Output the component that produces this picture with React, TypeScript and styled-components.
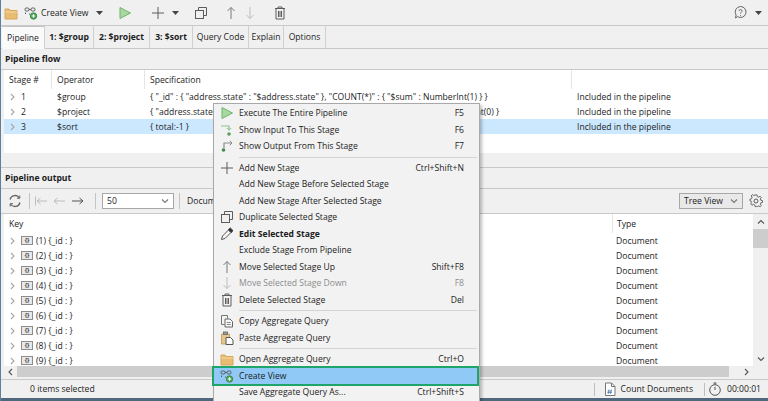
import React from 'react';
import styled, { createGlobalStyle } from 'styled-components';

const GlobalStyle = createGlobalStyle`
  html, body {
    margin: 0;
    padding: 0;
    background: #f0f0f0;
  }

  * {
    box-sizing: border-box;
  }
`;

const Window = styled.div`
  position: relative;
  width: 768px;
  height: 401px;
  overflow: hidden;
  background: #f0f0f0;
  color: #1c1c1c;
  font-family: 'Open Sans', 'Noto Sans', sans-serif;
  font-size: 8.6px;
  border-left: 1px solid #5f7f9f;
  display: flex;
  flex-direction: column;
`;

const Toolbar = styled.div`
  height: 26px;
  flex: none;
  display: flex;
  align-items: center;
  border-bottom: 1px solid #c9c9c9;
`;

const ToolSlot = styled.span<{ $w: number }>`
  width: ${({ $w }) => $w}px;
  flex: none;
  display: flex;
  align-items: center;
  justify-content: center;
`;

const ToolLabel = styled.span`
  width: 55px;
  flex: none;
  white-space: nowrap;
`;

const Grow = styled.div`
  flex: 1;
`;

const TabBar = styled.div`
  height: 23px;
  flex: none;
  display: flex;
  padding-left: 1px;
  border-bottom: 1px solid #c9c9c9;
`;

const Tab = styled.div<{ $w: number; $active?: boolean; $bold?: boolean }>`
  width: ${({ $w }) => $w}px;
  flex: none;
  display: flex;
  align-items: center;
  justify-content: center;
  white-space: nowrap;
  border-right: 1px solid #d0d0d0;
  font-weight: ${({ $bold }) => ($bold ? 700 : 400)};
  background: ${({ $active }) => ($active ? '#fafafa' : 'transparent')};
  border-top: ${({ $active }) => ($active ? '1px solid #c4c4c4' : 'none')};
  height: ${({ $active }) => ($active ? '23px' : '22px')};
`;

const SectionTitle = styled.div`
  height: 21px;
  flex: none;
  padding-left: 4px;
  display: flex;
  align-items: center;
  font-weight: 700;
  border-bottom: 1px solid #c9c9c9;
`;

const FlowTable = styled.div`
  height: 83px;
  flex: none;
  margin-left: 3px;
  background: #fff;
`;

const flowColumns = '48px 93px 427px 1fr';

const FlowHead = styled.div`
  height: 19px;
  display: grid;
  grid-template-columns: ${flowColumns};
  align-items: stretch;
`;

const FlowHeadCell = styled.div`
  padding-left: 5px;
  display: flex;
  align-items: center;
  border-right: 1px solid #e4e4e4;

  &:last-child {
    border-right: none;
  }
`;

const FlowRow = styled.div<{ $selected?: boolean }>`
  height: 15px;
  display: grid;
  grid-template-columns: ${flowColumns};
  align-items: center;
  white-space: nowrap;
  background: ${({ $selected }) => ($selected ? '#cce8ff' : 'transparent')};
`;

const StageCell = styled.div`
  display: flex;
  align-items: center;
  gap: 4px;
  padding-left: 5px;
`;

const FlowCell = styled.div`
  padding-left: 5px;
  overflow: hidden;
`;

const Divider = styled.div`
  height: 15px;
  flex: none;
  border-bottom: 1px solid #c9c9c9;
`;

const OutputTools = styled.div`
  height: 25px;
  flex: none;
  display: flex;
  align-items: center;
  border-bottom: 1px solid #c9c9c9;
`;

const ToolSep = styled.span<{ $left: number; $right: number }>`
  width: 1px;
  height: 16px;
  flex: none;
  background: #c4c4c4;
  margin: 0 ${({ $right }) => $right}px 0 ${({ $left }) => $left}px;
`;

const Combo = styled.div<{ $w: number }>`
  width: ${({ $w }) => $w}px;
  height: 16px;
  flex: none;
  display: flex;
  align-items: center;
  justify-content: space-between;
  padding: 0 4px;
  white-space: nowrap;
  border: 1px solid #a8a8a8;
  background: ${({ $w }) => ($w > 70 ? '#fff' : '#e9e9e9')};
`;

const OutputBody = styled.div`
  height: 152px;
  flex: none;
  display: flex;
  background: #fff;
  margin-left: 3px;
`;

const OutputList = styled.div`
  flex: 1;
  overflow: hidden;
`;

const outputColumns = '608px 1fr';

const OutputHead = styled.div`
  height: 19px;
  display: grid;
  grid-template-columns: ${outputColumns};
  align-items: center;
`;

const HeadText = styled.div`
  padding-left: 5px;
  height: 100%;
  display: flex;
  align-items: center;

  & + & {
    border-left: 1px solid #e4e4e4;
    padding-left: 4px;
  }
`;

const OutputRow = styled.div`
  height: 15px;
  display: grid;
  grid-template-columns: ${outputColumns};
  align-items: center;
`;

const KeyCell = styled.div`
  display: flex;
  align-items: center;
  padding-left: 5px;
  gap: 3px;
`;

const DocBadge = styled.span`
  width: 12px;
  height: 9px;
  flex: none;
  margin-left: 1px;
  border: 1px solid #8c8c8c;
  background: #e8e8e8;
  font-size: 6px;
  line-height: 7px;
  font-weight: 700;
  text-align: center;
  color: #444;
`;

const TypeCell = styled.div`
  padding-left: 4px;
`;

const VScroll = styled.div`
  width: 15px;
  flex: none;
  background: #f0f0f0;
  display: flex;
  flex-direction: column;
  align-items: center;
`;

const ScrollEnd = styled.div`
  height: 15px;
  flex: none;
  display: flex;
  align-items: center;
  justify-content: center;
`;

const VThumb = styled.div`
  width: 100%;
  height: 19px;
  flex: none;
  background: #cdcdcd;
`;

const HScroll = styled.div`
  height: 11px;
  flex: none;
  display: flex;
  align-items: center;
  background: #f0f0f0;
  margin-left: 3px;
`;

const HEnd = styled.div<{ $w: number }>`
  width: ${({ $w }) => $w}px;
  flex: none;
  display: flex;
  align-items: center;
  justify-content: center;
`;

const HThumb = styled.div`
  width: 712px;
  height: 11px;
  flex: none;
  background: #cdcdcd;
`;

const StatusBar = styled.div`
  flex: 1;
  display: flex;
  align-items: center;
  border-top: 1px solid #c9c9c9;
  margin-top: 2px;
  padding-left: 29px;
  white-space: nowrap;
`;

const WindowEdge = styled.div`
  height: 3px;
  flex: none;
  margin-left: -1px;
  background: #50687e;
`;

const StatusSep = styled.span`
  width: 1px;
  height: 13px;
  flex: none;
  background: #bdbdbd;
`;

const StatusItem = styled.span<{ $gap: number; $w: number }>`
  width: ${({ $w }) => $w}px;
  flex: none;
  display: flex;
  align-items: center;
  gap: ${({ $gap }) => $gap}px;
  justify-content: flex-end;
`;

const Menu = styled.div`
  position: absolute;
  left: 212px;
  top: 103px;
  width: 267px;
  height: 300px;
  padding-top: 1px;
  background: #f2f2f2;
  border: 1px solid #a9a9a9;
  box-shadow: 2px 2px 3px rgba(0, 0, 0, 0.25);
`;

const MenuRow = styled.div<{ $highlight?: boolean; $disabled?: boolean; $bold?: boolean }>`
  height: 16.5px;
  display: grid;
  grid-template-columns: 25px 1fr auto;
  align-items: center;
  padding-right: 15px;
  white-space: nowrap;
  font-weight: ${({ $bold }) => ($bold ? 700 : 400)};
  color: ${({ $disabled }) => ($disabled ? '#8d8d8d' : '#1c1c1c')};
  ${({ $highlight }) =>
    $highlight &&
    `
    background: #90c8f6;
    outline: 2px solid #1fa56a;
    margin-right: 2px;
    padding-right: 13px;
  `}
`;

const MenuIcon = styled.span`
  display: flex;
  align-items: center;
  justify-content: center;
`;

const MenuSep = styled.div`
  height: 5px;
  display: flex;
  align-items: center;
  padding: 0 2px 0 25px;

  &::after {
    content: '';
    flex: 1;
    height: 1px;
    background: #d4d4d4;
  }
`;

const Svg: React.FC<{ w?: number; h?: number; children: React.ReactNode }> = ({ w = 14, h = 14, children }) => (
  <svg width={w} height={h} viewBox="0 0 14 14" fill="none" stroke="#5c5c5c" strokeWidth="1">
    {children}
  </svg>
);

const Folder = () => (
  <Svg>
    <path d="M1 3h4l1 1.5h7V13H1z" fill="#e9bd71" stroke="#d6a65a" />
    <path d="M1 6h12" stroke="#f3d9a5" />
  </Svg>
);
const CreateViewIcon = () => (
  <Svg>
    <rect x="1" y="2" width="4" height="3" rx="1.2" />
    <rect x="7" y="2" width="4" height="3" rx="1.2" />
    <path d="M5 3.5h2M1.5 6.5v1.5M5 8h1" />
    <circle cx="9.5" cy="10" r="3.2" fill="#4fa85a" stroke="#3f8a4b" />
    <path d="M9.5 8.3v3.4M7.8 10h3.4" stroke="#fff" />
  </Svg>
);
const Play = () => (
  <Svg>
    <path d="M2 1.5 L12.5 7 L2 12.5z" fill="#a8d8a0" stroke="#6fb56c" />
  </Svg>
);
const Plus = () => (
  <Svg>
    <path d="M7 1v12M1 7h12" />
  </Svg>
);
const Duplicate = () => (
  <Svg>
    <rect x="1.5" y="4.5" width="8" height="8" fill="#f0f0f0" />
    <path d="M4.5 4.5v-3h8v8h-3" />
  </Svg>
);
const ArrowUp: React.FC<{ light?: boolean }> = ({ light }) => (
  <Svg>
    <path d="M7 13V1.5M3.5 5 7 1.5 10.500 5" stroke={light ? '#bdbdbd' : '#7a7a7a'} />
  </Svg>
);
const ArrowDown: React.FC<{ light?: boolean }> = ({ light }) => (
  <Svg>
    <path d="M7 1v11.500M3.500 9 7 12.500 10.500 9" stroke={light ? '#bdbdbd' : '#7a7a7a'} />
  </Svg>
);
const Trash = () => (
  <Svg>
    <path d="M2 2.500h10M5 2.500v-1.500h4v1.500M3 2.500h8v10.500H3zM5.500 5v6M7 5v6M8.500 5v6" />
  </Svg>
);
const Help = () => (
  <svg width="15" height="15" viewBox="0 0 15 15" fill="none" stroke="#666">
    <path d="M7.500 1.500a5.500 5.500 0 1 1-3 10.100L2.500 13l.6-3a5.500 5.500 0 0 1 4.400-8.500z" />
    <path d="M6 6a1.500 1.500 0 1 1 2.300 1.300c-.5.300-.8.600-.8 1.200M7.500 10v.8" />
  </svg>
);
const Caret = () => (
  <svg width="7" height="4" viewBox="0 0 7 4">
    <path d="M0 0h7L3.500 4z" fill="#444" />
  </svg>
);
const Chevron: React.FC<{ dir?: 'right' | 'down' | 'up' | 'left'; color?: string }> = ({ dir = 'right', color = '#a6a6a6' }) => {
  const d = {
    right: 'M2 1l3 3-3 3',
    left: 'M5 1L2 4l3 3',
    down: 'M1 2.500l3 3 3-3',
    up: 'M1 5.500l3-3 3 3',
  }[dir];
  return (
    <svg width="8" height="8" viewBox="0 0 8 8" fill="none" stroke={color} strokeWidth="1.100">
      <path d={d} />
    </svg>
  );
};
const Refresh = () => (
  <Svg>
    <path d="M2 5.500a5.200 5.200 0 0 1 9.500-1.500M12 8.500a5.200 5.200 0 0 1-9.500 1.500" stroke="#666" strokeWidth="1.300" />
    <path d="M11.800 1.500V4.300H9M2.200 12.500V9.700H5" stroke="#666" />
  </Svg>
);
const NavFirst = () => (
  <Svg>
    <path d="M1.500 2.500v9M13 7H3M6.500 4 3 7l3.500 3" stroke="#bcbcbc" />
  </Svg>
);
const NavPrev = () => (
  <Svg>
    <path d="M13 7H2M5.500 4 2 7l3.500 3" stroke="#bcbcbc" />
  </Svg>
);
const NavNext = () => (
  <Svg>
    <path d="M1 7h11M8.500 4 12 7l-3.500 3" stroke="#555" />
  </Svg>
);
const Gear = () => (
  <Svg>
    <circle cx="7" cy="7" r="2" />
    <path d="M6 1h2l.4 1.800 1.500.6 1.500-1 1.300 1.400-1 1.500.6 1.500 1.700.4v1.800l-1.700.4-.6 1.500 1 1.500-1.300 1.400-1.500-1-1.500.6L8 13.500H6l-.4-1.800-1.500-.6-1.500 1-1.300-1.400 1-1.500-.6-1.500L.5 7.300V5.500l1.700-.4.6-1.500-1-1.500L3.100.700l1.500 1 1.400-.7z" transform="translate(0.500 0) scale(.93)" />
  </Svg>
);
const ShowInput = () => (
  <Svg>
    <path d="M1 3h8v4" stroke="#8fbf8a" strokeWidth="1.200" />
    <path d="M6.800 5 9 7.300 11.200 5" stroke="#8fbf8a" />
    <circle cx="9" cy="11" r="1.800" fill="#5b9f5e" stroke="none" />
  </Svg>
);
const ShowOutput = () => (
  <Svg>
    <path d="M4 9V4h8" stroke="#8a8a8a" strokeWidth="1.200" />
    <path d="M9.800 1.800 12 4 9.800 6.200" stroke="#8a8a8a" />
    <circle cx="3.500" cy="11" r="1.800" fill="#3f8a4b" stroke="none" />
  </Svg>
);
const Pencil = () => (
  <Svg>
    <path d="M1.500 12.500l1-3.500 6-6 2.500 2.500-6 6z" fill="#f4f4f4" stroke="#555" />
    <path d="M8.500 2.500l1.800-1.500 2.700 2.700-2 1.800z" fill="#333" stroke="#333" />
  </Svg>
);
const CopyDoc = () => (
  <Svg>
    <path d="M1.500 1.500h6v3M1.500 1.500v9h3" stroke="#777" />
    <path d="M5 5h5l2.500 2.500V13H5z" fill="#f7f7f7" stroke="#666" />
    <path d="M6.800 8.500h4M6.800 10.500h4" stroke="#888" />
  </Svg>
);
const PasteDoc = () => (
  <Svg>
    <path d="M1.500 3h8v10h-8z" fill="#e6c58e" stroke="#c9a467" />
    <rect x="3.500" y="1" width="4" height="2.500" fill="#999" stroke="#777" />
    <path d="M6 6.500h4.500L13 9v4.500H6z" fill="#fdfdfd" stroke="#555" />
  </Svg>
);
const CountDoc = () => (
  <Svg>
    <path d="M2.500 1h6L12 4.500V13.500H2.500z" stroke="#777" fill="#fff" />
    <path d="M8.500 1v3.500H12" stroke="#777" />
    <path d="M6 7.500l-.8 4.500M8.300 7.500l-.8 4.500M4.500 9h4.500M4.300 10.500h4.500" stroke="#3b6fa8" strokeWidth=".7" />
  </Svg>
);
const Clock = () => (
  <Svg>
    <circle cx="7" cy="8" r="5.300" stroke="#555" />
    <path d="M5.500 1h3M7 1v1.500M7 8V4.800" stroke="#555" />
  </Svg>
);

type MenuEntry = { label?: string; key?: string; icon?: React.ReactNode; bold?: boolean; disabled?: boolean; highlight?: boolean; sep?: boolean };

const menuEntries: MenuEntry[] = [
  { label: 'Execute The Entire Pipeline', key: 'F5', icon: <Play /> },
  { label: 'Show Input To This Stage', key: 'F6', icon: <ShowInput /> },
  { label: 'Show Output From This Stage', key: 'F7', icon: <ShowOutput /> },
  { sep: true },
  { label: 'Add New Stage', key: 'Ctrl+Shift+N', icon: <Plus /> },
  { label: 'Add New Stage Before Selected Stage' },
  { label: 'Add New Stage After Selected Stage' },
  { label: 'Duplicate Selected Stage', icon: <Duplicate /> },
  { label: 'Edit Selected Stage', bold: true, icon: <Pencil /> },
  { label: 'Exclude Stage From Pipeline' },
  { label: 'Move Selected Stage Up', key: 'Shift+F8', icon: <ArrowUp /> },
  { label: 'Move Selected Stage Down', key: 'F8', disabled: true, icon: <ArrowDown light /> },
  { label: 'Delete Selected Stage', key: 'Del', icon: <Trash /> },
  { sep: true },
  { label: 'Copy Aggregate Query', icon: <CopyDoc /> },
  { label: 'Paste Aggregate Query', icon: <PasteDoc /> },
  { sep: true },
  { label: 'Open Aggregate Query', key: 'Ctrl+O', icon: <Folder /> },
  { label: 'Create View', highlight: true, icon: <CreateViewIcon /> },
  { label: 'Save Aggregate Query As...', key: 'Ctrl+Shift+S' },
];

const flowRows = [
  { n: 1, op: '$group', spec: '{ "_id" : { "address.state" : "$address.state" }, "COUNT(*)" : { "$sum" : NumberInt(1) } }' },
  { n: 2, op: '$project', spec: '{ "address.state" : "$_id.address.state", "COUNT(*)" : "$COUNT(*)", "_id" : NumberInt(0) }' },
  { n: 3, op: '$sort', spec: '{ total:-1 }', selected: true },
];

const tabs = [
  { label: 'Pipeline', w: 43, active: true },
  { label: '1: $group', w: 49, bold: true },
  { label: '2: $project', w: 56, bold: true },
  { label: '3: $sort', w: 43, bold: true },
  { label: 'Query Code', w: 56 },
  { label: 'Explain', w: 35 },
  { label: 'Options', w: 42 },
];

const App: React.FC = () => (
  <Window>
    <GlobalStyle />
    <Toolbar>
      <ToolSlot $w={20}><Folder /></ToolSlot>
      <ToolSlot $w={20}><CreateViewIcon /></ToolSlot>
      <ToolLabel>Create View</ToolLabel>
      <ToolSlot $w={7}><Caret /></ToolSlot>
      <ToolSlot $w={44}><Play /></ToolSlot>
      <ToolSlot $w={22}><Plus /></ToolSlot>
      <ToolSlot $w={12}><Caret /></ToolSlot>
      <ToolSlot $w={40}><Duplicate /></ToolSlot>
      <ToolSlot $w={20}><ArrowUp /></ToolSlot>
      <ToolSlot $w={18}><ArrowDown light /></ToolSlot>
      <ToolSlot $w={42}><Trash /></ToolSlot>
      <Grow />
      <ToolSlot $w={15}><Help /></ToolSlot>
      <ToolSlot $w={20}><Caret /></ToolSlot>
    </Toolbar>
    <TabBar>
      {tabs.map((t) => (
        <Tab key={t.label} $w={t.w} $active={t.active} $bold={t.bold}>{t.label}</Tab>
      ))}
    </TabBar>
    <SectionTitle>Pipeline flow</SectionTitle>
    <FlowTable>
      <FlowHead>
        <FlowHeadCell>Stage #</FlowHeadCell>
        <FlowHeadCell>Operator</FlowHeadCell>
        <FlowHeadCell>Specification</FlowHeadCell>
        <FlowHeadCell />
      </FlowHead>
      {flowRows.map((r) => (
        <FlowRow key={r.n} $selected={r.selected}>
          <StageCell><Chevron />{r.n}</StageCell>
          <FlowCell>{r.op}</FlowCell>
          <FlowCell>{r.spec}</FlowCell>
          <FlowCell>Included in the pipeline</FlowCell>
        </FlowRow>
      ))}
    </FlowTable>
    <Divider />
    <SectionTitle>Pipeline output</SectionTitle>
    <OutputTools>
      <ToolSlot $w={28}><Refresh /></ToolSlot>
      <ToolSep $left={0} $right={3} />
      <ToolSlot $w={16}><NavFirst /></ToolSlot>
      <ToolSlot $w={19}><NavPrev /></ToolSlot>
      <ToolSlot $w={20}><NavNext /></ToolSlot>
      <ToolSep $left={7} $right={6} />
      <Combo $w={72}>50<Chevron dir="down" color="#777" /></Combo>
      <ToolSep $left={5} $right={7} />
      <span>Documents</span>
      <Grow />
      <Combo $w={64}>Tree View<Chevron dir="down" color="#777" /></Combo>
      <ToolSlot $w={25}><Gear /></ToolSlot>
    </OutputTools>
    <OutputBody>
      <OutputList>
        <OutputHead>
          <HeadText>Key</HeadText>
          <HeadText>Type</HeadText>
        </OutputHead>
        {[1, 2, 3, 4, 5, 6, 7, 8, 9].map((n) => (
          <OutputRow key={n}>
            <KeyCell>
              <Chevron />
              <DocBadge>{'{}'}</DocBadge>
              <span>({n}) {'{_id : }'}</span>
            </KeyCell>
            <TypeCell>Document</TypeCell>
          </OutputRow>
        ))}
      </OutputList>
      <VScroll>
        <ScrollEnd><Chevron dir="up" color="#555" /></ScrollEnd>
        <VThumb />
        <Grow />
        <ScrollEnd><Chevron dir="down" color="#555" /></ScrollEnd>
      </VScroll>
    </OutputBody>
    <HScroll>
      <HEnd $w={13}><Chevron dir="left" color="#555" /></HEnd>
      <HThumb />
      <HEnd $w={35}><Chevron color="#555" /></HEnd>
    </HScroll>
    <StatusBar>
      <span>0 items selected</span>
      <Grow />
      <StatusSep />
      <StatusItem $gap={4} $w={98}><CountDoc />Count Documents</StatusItem>
      <StatusItem $gap={0} $w={11} />
      <StatusSep />
      <StatusItem $gap={5} $w={56}><Clock />00:00:01</StatusItem>
      <StatusItem $gap={0} $w={7} />
    </StatusBar>
    <WindowEdge />
    <Menu>
      {menuEntries.map((m, i) =>
        m.sep ? (
          <MenuSep key={i} />
        ) : (
          <MenuRow key={m.label} $bold={m.bold} $disabled={m.disabled} $highlight={m.highlight}>
            <MenuIcon>{m.icon}</MenuIcon>
            <span>{m.label}</span>
            <span>{m.key}</span>
          </MenuRow>
        ),
      )}
    </Menu>
  </Window>
);

export default App;
